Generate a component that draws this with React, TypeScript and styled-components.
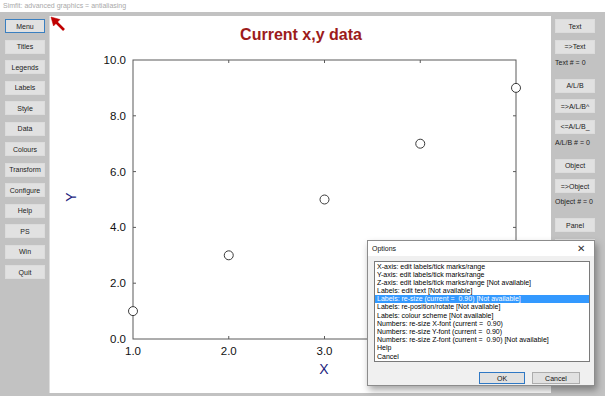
import styled, { createGlobalStyle } from "styled-components";

const GlobalStyle = createGlobalStyle`
  html, body { margin: 0; padding: 0; background: #fff; }
  body { font-family: "Liberation Sans", Arial, sans-serif; }
`;

const Window = styled.div`
  position: relative;
  width: 605px;
  height: 396px;
  overflow: hidden;
  display: flex;
  flex-direction: column;
  font-family: "Liberation Sans", Arial, sans-serif;
`;

const TitleBar = styled.div`
  height: 12px;
  line-height: 12px;
  padding-left: 3px;
  font-size: 7px;
  color: #a9a9a9;
  background: #fff;
`;

const Body = styled.div`
  flex: 1;
  display: flex;
  background: #c2c2c2;
  padding: 4px 0 3px;
`;

const SidePanel = styled.div<{ $w: number; $pl: number }>`
  width: ${(p) => p.$w}px;
  flex-shrink: 0;
  display: flex;
  flex-direction: column;
  padding: 3px 0 0 ${(p) => p.$pl}px;
  box-sizing: border-box;
`;

const LeftStack = styled.div`
  display: flex;
  flex-direction: column;
  gap: 6.5px;
`;

const Group = styled.div`
  display: flex;
  flex-direction: column;
  gap: 6.5px;
  margin-bottom: 10px;
`;

const Btn = styled.div<{ $focus?: boolean }>`
  width: 40px;
  height: 14px;
  box-sizing: border-box;
  display: flex;
  align-items: center;
  justify-content: center;
  font-size: 7px;
  color: #222;
  background: #e1e1e1;
  border: 1px solid ${(p) => (p.$focus ? "#3a7fc0" : "#dcdcdc")};
  white-space: nowrap;
`;

const Status = styled.div`
  height: 12px;
  line-height: 12px;
  margin-top: -3.5px;
  font-size: 7px;
  color: #222;
  white-space: nowrap;
`;

const Canvas = styled.div`
  flex: 1;
  background: #fff;
  border-left: 1px solid #dedede;
`;

const Dialog = styled.div`
  position: absolute;
  left: 367px;
  top: 240px;
  width: 228px;
  height: 146px;
  box-sizing: border-box;
  border: 1px solid #8c8c8c;
  background: #f0f0f0;
  box-shadow: 2px 4px 7px rgba(0, 0, 0, 0.35);
  display: flex;
  flex-direction: column;
`;

const DialogHead = styled.div`
  height: 15px;
  background: #fff;
  display: flex;
  align-items: center;
  justify-content: space-between;
  padding: 0 9px 0 4px;
  font-size: 7px;
  color: #111;
`;

const CloseX = styled.span`
  font-size: 10px;
  color: #333;
  line-height: 1;
`;

const DialogBody = styled.div`
  flex: 1;
  padding: 5px 4px 0 6px;
  display: flex;
  flex-direction: column;
`;

const ListBox = styled.div`
  height: 101px;
  box-sizing: border-box;
  border: 1px solid #7a7a7a;
  background: #fff;
  padding-top: 0.5px;
`;

const Item = styled.div<{ $sel?: boolean }>`
  height: 8.2px;
  line-height: 8.2px;
  padding-left: 2px;
  font-size: 7px;
  white-space: pre;
  color: ${(p) => (p.$sel ? "#fff" : "#000")};
  background: ${(p) => (p.$sel ? "#3399ff" : "transparent")};
`;

const DialogButtons = styled.div`
  display: flex;
  justify-content: flex-end;
  gap: 7px;
  padding: 10px 10px 0 0;
`;

const DlgBtn = styled.div<{ $w: number; $def?: boolean }>`
  width: ${(p) => p.$w}px;
  height: 12px;
  box-sizing: border-box;
  display: flex;
  align-items: center;
  justify-content: center;
  font-size: 7px;
  color: #111;
  background: #e1e1e1;
  border: 1px solid ${(p) => (p.$def ? "#2f78c4" : "#adadad")};
`;

const leftButtons = ["Menu", "Titles", "Legends", "Labels", "Style", "Data", "Colours", "Transform", "Configure", "Help", "PS", "Win", "Quit"];

const rightGroups = [
  { buttons: ["Text", "=>Text"], status: "Text # = 0" },
  { buttons: ["A/L/B", "=>A/L/B^", "<=A/L/B_"], status: "A/L/B # = 0" },
  { buttons: ["Object", "=>Object"], status: "Object # = 0" },
  { buttons: ["Panel", "=>Panel"], status: "Panel # = 0" },
];

const options = [
  "X-axis: edit labels/tick marks/range",
  "Y-axis: edit labels/tick marks/range",
  "Z-axis: edit labels/tick marks/range [Not available]",
  "Labels: edit text [Not available]",
  "Labels: re-size (current =  0.90) [Not available]",
  "Labels: re-position/rotate [Not available]",
  "Labels: colour scheme [Not available]",
  "Numbers: re-size X-font (current =  0.90)",
  "Numbers: re-size Y-font (current =  0.90)",
  "Numbers: re-size Z-font (current =  0.90) [Not available]",
  "Help",
  "Cancel",
];

// plot scale, in page pixels
const px = (x: number) => 133 + (x - 1) * 95.75;
const py = (y: number) => 339 - y * 27.9;
const data = [[1, 1], [2, 3], [3, 5], [4, 7], [5, 9]];

const Plot = () => (
  <svg width="100%" height="100%" viewBox="50 16 501 377" style={{ display: "block" }}>
    <text x={301} y={40} textAnchor="middle" fontSize={16} fontWeight="bold" fill="#9c1b1b" fontFamily="Liberation Sans, Arial, sans-serif">
      Current x,y data
    </text>
    <rect x={133} y={60} width={383} height={279} fill="none" stroke="#5a5a5a" strokeWidth={1} />
    {[2, 3, 4].map((x) => (
      <g key={"xt" + x} stroke="#5a5a5a">
        <line x1={px(x)} y1={339} x2={px(x)} y2={336} />
        <line x1={px(x)} y1={60} x2={px(x)} y2={63} />
      </g>
    ))}
    {[2, 4, 6, 8].map((y) => (
      <g key={"yt" + y} stroke="#5a5a5a">
        <line x1={133} y1={py(y)} x2={136} y2={py(y)} />
        <line x1={516} y1={py(y)} x2={513} y2={py(y)} />
      </g>
    ))}
    <g fontSize={11.5} fill="#111" fontFamily="Liberation Sans, Arial, sans-serif">
      {[0, 2, 4, 6, 8, 10].map((y) => (
        <text key={"yl" + y} x={126} y={py(y) + 4} textAnchor="end">
          {y.toFixed(1)}
        </text>
      ))}
      {[1, 2, 3, 4, 5].map((x) => (
        <text key={"xl" + x} x={px(x)} y={355} textAnchor="middle">
          {x.toFixed(1)}
        </text>
      ))}
    </g>
    {data.map(([x, y]) => (
      <circle key={"p" + x} cx={px(x)} cy={py(y)} r={4.5} fill="#fff" stroke="#3a3a3a" strokeWidth={1} />
    ))}
    <text x={324} y={374} textAnchor="middle" fontSize={14} fill="#1e1e7e" fontFamily="Liberation Sans, Arial, sans-serif">
      X
    </text>
    <text x={71} y={202} textAnchor="middle" fontSize={14} fill="#1e1e7e" fontFamily="Liberation Sans, Arial, sans-serif" transform="rotate(-90 71 197)">
      Y
    </text>
    <g stroke="#c00000" fill="#c00000">
      <line x1={64} y1={30} x2={55} y2={21} strokeWidth={2.6} />
      <polygon points="51,17 60,19.5 53.5,26" strokeWidth={0.5} />
    </g>
  </svg>
);

export default function App() {
  return (
    <Window>
      <GlobalStyle />
      <TitleBar>Simfit: advanced graphics = antialiasing</TitleBar>
      <Body>
        <SidePanel $w={49} $pl={5}>
          <LeftStack>
            {leftButtons.map((b, i) => (
              <Btn key={b} $focus={i === 0}>{b}</Btn>
            ))}
          </LeftStack>
        </SidePanel>
        <Canvas>
          <Plot />
        </Canvas>
        <SidePanel $w={54} $pl={4}>
          {rightGroups.map((g) => (
            <Group key={g.status}>
              {g.buttons.map((b) => (
                <Btn key={b}>{b}</Btn>
              ))}
              <Status>{g.status}</Status>
            </Group>
          ))}
        </SidePanel>
      </Body>
      <Dialog>
        <DialogHead>
          <span>Options</span>
          <CloseX>✕</CloseX>
        </DialogHead>
        <DialogBody>
          <ListBox>
            {options.map((o, i) => (
              <Item key={o} $sel={i === 4}>{o}</Item>
            ))}
          </ListBox>
          <DialogButtons>
            <DlgBtn $w={46} $def>OK</DlgBtn>
            <DlgBtn $w={48}>Cancel</DlgBtn>
          </DialogButtons>
        </DialogBody>
      </Dialog>
    </Window>
  );
}
